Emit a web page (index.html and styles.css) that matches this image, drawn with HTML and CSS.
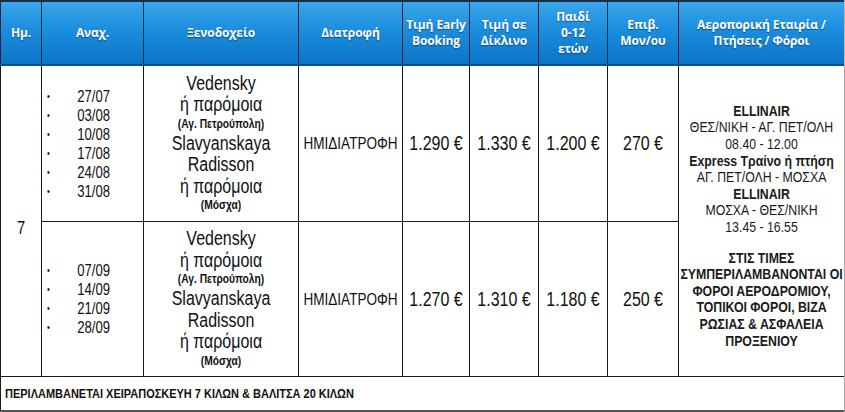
FILE: index.html
```html
<!DOCTYPE html>
<html lang="el">
<head>
<meta charset="utf-8">
<title>Τιμές</title>
<link rel="stylesheet" href="styles.css">
</head>
<body>
<table class="prices">
  <colgroup>
    <col class="c1"><col class="c2"><col class="c3"><col class="c4"><col class="c5"><col class="c6"><col class="c7"><col class="c8"><col class="c9">
  </colgroup>
  <thead>
    <tr>
      <th>Ημ.</th>
      <th>Αναχ.</th>
      <th>Ξενοδοχείο</th>
      <th>Διατροφή</th>
      <th>Τιμή Early<br>Booking</th>
      <th>Τιμή σε<br>Δίκλινο</th>
      <th>Παιδί<br>0-12<br>ετών</th>
      <th>Επιβ.<br>Μον/ου</th>
      <th>Αεροπορική Εταιρία /<br>Πτήσεις / Φόροι</th>
    </tr>
  </thead>
  <tbody>
    <tr class="r1">
      <td class="day" rowspan="2"><div class="nar">7</div></td>
      <td class="dates">
        <ul class="nar dlist">
          <li><span class="b">•</span>27/07</li>
          <li><span class="b">•</span>03/08</li>
          <li><span class="b">•</span>10/08</li>
          <li><span class="b">•</span>17/08</li>
          <li><span class="b">•</span>24/08</li>
          <li><span class="b">•</span>31/08</li>
        </ul>
      </td>
      <td class="hotel">
        <div class="nar">
          <div class="m">Vedensky</div>
          <div class="m">ή παρόμοια</div>
          <div class="s">(Αγ. Πετρούπολη)</div>
          <div class="m">Slavyanskaya</div>
          <div class="m">Radisson</div>
          <div class="m">ή παρόμοια</div>
          <div class="s">(Μόσχα)</div>
        </div>
      </td>
      <td class="meal"><div class="nar">ΗΜΙΔΙΑΤΡΟΦΗ</div></td>
      <td class="price"><div class="nar">1.290 €</div></td>
      <td class="price"><div class="nar">1.330 €</div></td>
      <td class="price"><div class="nar">1.200 €</div></td>
      <td class="price"><div class="nar">270 €</div></td>
      <td class="air" rowspan="2">
        <div class="nar">
          <div class="bd">ELLINAIR</div>
          <div>ΘΕΣ/ΝΙΚΗ - ΑΓ. ΠΕΤ/ΟΛΗ</div>
          <div>08.40 - 12.00</div>
          <div class="bd">Express Τραίνο ή πτήση</div>
          <div>ΑΓ. ΠΕΤ/ΟΛΗ - ΜΟΣΧΑ</div>
          <div class="bd">ELLINAIR</div>
          <div>ΜΟΣΧΑ - ΘΕΣ/ΝΙΚΗ</div>
          <div>13.45 - 16.55</div>
          <div class="gap"></div>
          <div class="bd">ΣΤΙΣ ΤΙΜΕΣ</div>
          <div class="bd">ΣΥΜΠΕΡΙΛΑΜΒΑΝΟΝΤΑΙ ΟΙ</div>
          <div class="bd">ΦΟΡΟΙ ΑΕΡΟΔΡΟΜΙΟΥ,</div>
          <div class="bd">ΤΟΠΙΚΟΙ ΦΟΡΟΙ, ΒΙΖΑ</div>
          <div class="bd">ΡΩΣΙΑΣ &amp; ΑΣΦΑΛΕΙΑ</div>
          <div class="bd">ΠΡΟΞΕΝΙΟΥ</div>
        </div>
      </td>
    </tr>
    <tr class="r2">
      <td class="dates">
        <ul class="nar dlist">
          <li><span class="b">•</span>07/09</li>
          <li><span class="b">•</span>14/09</li>
          <li><span class="b">•</span>21/09</li>
          <li><span class="b">•</span>28/09</li>
        </ul>
      </td>
      <td class="hotel">
        <div class="nar">
          <div class="m">Vedensky</div>
          <div class="m">ή παρόμοια</div>
          <div class="s">(Αγ. Πετρούπολη)</div>
          <div class="m">Slavyanskaya</div>
          <div class="m">Radisson</div>
          <div class="m">ή παρόμοια</div>
          <div class="s">(Μόσχα)</div>
        </div>
      </td>
      <td class="meal"><div class="nar">ΗΜΙΔΙΑΤΡΟΦΗ</div></td>
      <td class="price"><div class="nar">1.270 €</div></td>
      <td class="price"><div class="nar">1.310 €</div></td>
      <td class="price"><div class="nar">1.180 €</div></td>
      <td class="price"><div class="nar">250 €</div></td>
    </tr>
    <tr class="foot">
      <td colspan="9"><div class="nar">ΠΕΡΙΛΑΜΒΑΝΕΤΑΙ ΧΕΙΡΑΠΟΣΚΕΥΗ 7 ΚΙΛΩΝ &amp; ΒΑΛΙΤΣΑ 20 ΚΙΛΩΝ</div></td>
    </tr>
  </tbody>
</table>
</body>
</html>
```

FILE: styles.css
```css
html, body {
  margin: 0;
  padding: 0;
  background: #ffffff;
}

.prices {
  width: 845px;
  table-layout: fixed;
  border-collapse: collapse;
  font-family: "Liberation Sans", Arial, sans-serif;
  color: #111111;
}

.c1 { width: 41px; }
.c2 { width: 102px; }
.c3 { width: 155px; }
.c4 { width: 104px; }
.c5 { width: 67px; }
.c6 { width: 69px; }
.c7 { width: 69px; }
.c8 { width: 71px; }
.c9 { width: 167px; }

/* Arial Narrow look: Liberation Sans squeezed horizontally */
.nar {
  width: 122%;
  transform: scaleX(0.82);
  transform-origin: 0 0;
  white-space: nowrap;
}

.prices th {
  height: 62px;
  padding: 0;
  color: #ffffff;
  font-family: "Open Sans", "Noto Sans", sans-serif;
  font-weight: 700;
  font-size: 12px;
  line-height: 16px;
  letter-spacing: -0.1px;
  text-align: center;
  vertical-align: middle;
  text-shadow: 0 1px 1px rgba(0, 40, 90, 0.6);
  background: linear-gradient(#3aa6ec 0%, #1b8ddd 45%, #0b74c8 100%);
  border-top: 2px solid #1c2f47;
  border-bottom: 2px solid #0b4f8e;
  border-left: 1px solid #1a2536;
  border-right: 1px solid #1a2536;
}

.prices th:last-child {
  border-right: 3px solid #b4b4b4;
}

.prices td {
  border: 1px solid #1a1a1a;
  padding: 0;
  text-align: center;
  vertical-align: middle;
}

.r1 td { height: 155px; }
.r2 td { height: 154px; }

.prices td.day {
  font-size: 18px;
  padding-top: 14px;
}

.dlist {
  list-style: none;
  margin: 0;
  padding: 0 0 0 6px;
  text-align: left;
  font-size: 16px;
  line-height: 19px;
}

.dlist li {
  display: flex;
  align-items: center;
}

.b {
  width: 37px;
  font-size: 10px;
  line-height: 19px;
}

.hotel .m {
  font-size: 19.5px;
  line-height: 21.5px;
}

.hotel .s {
  font-size: 12.5px;
  font-weight: 700;
  line-height: 17px;
}

.meal {
  font-size: 16.5px;
}

.price {
  font-size: 19.5px;
}

.prices td.air {
  font-size: 15px;
  line-height: 16.6px;
  color: #1a1a1a;
  padding-top: 10px;
  border-right: 3px solid #a8a8a8;
}

.air .bd {
  font-weight: 700;
}

.air .gap {
  height: 14px;
}

.foot td {
  height: 33px;
  text-align: left;
  padding-left: 4px;
  font-size: 13.4px;
  font-weight: 700;
  border-right: 3px solid #a8a8a8;
  border-bottom: 2px solid #555555;
}
```
